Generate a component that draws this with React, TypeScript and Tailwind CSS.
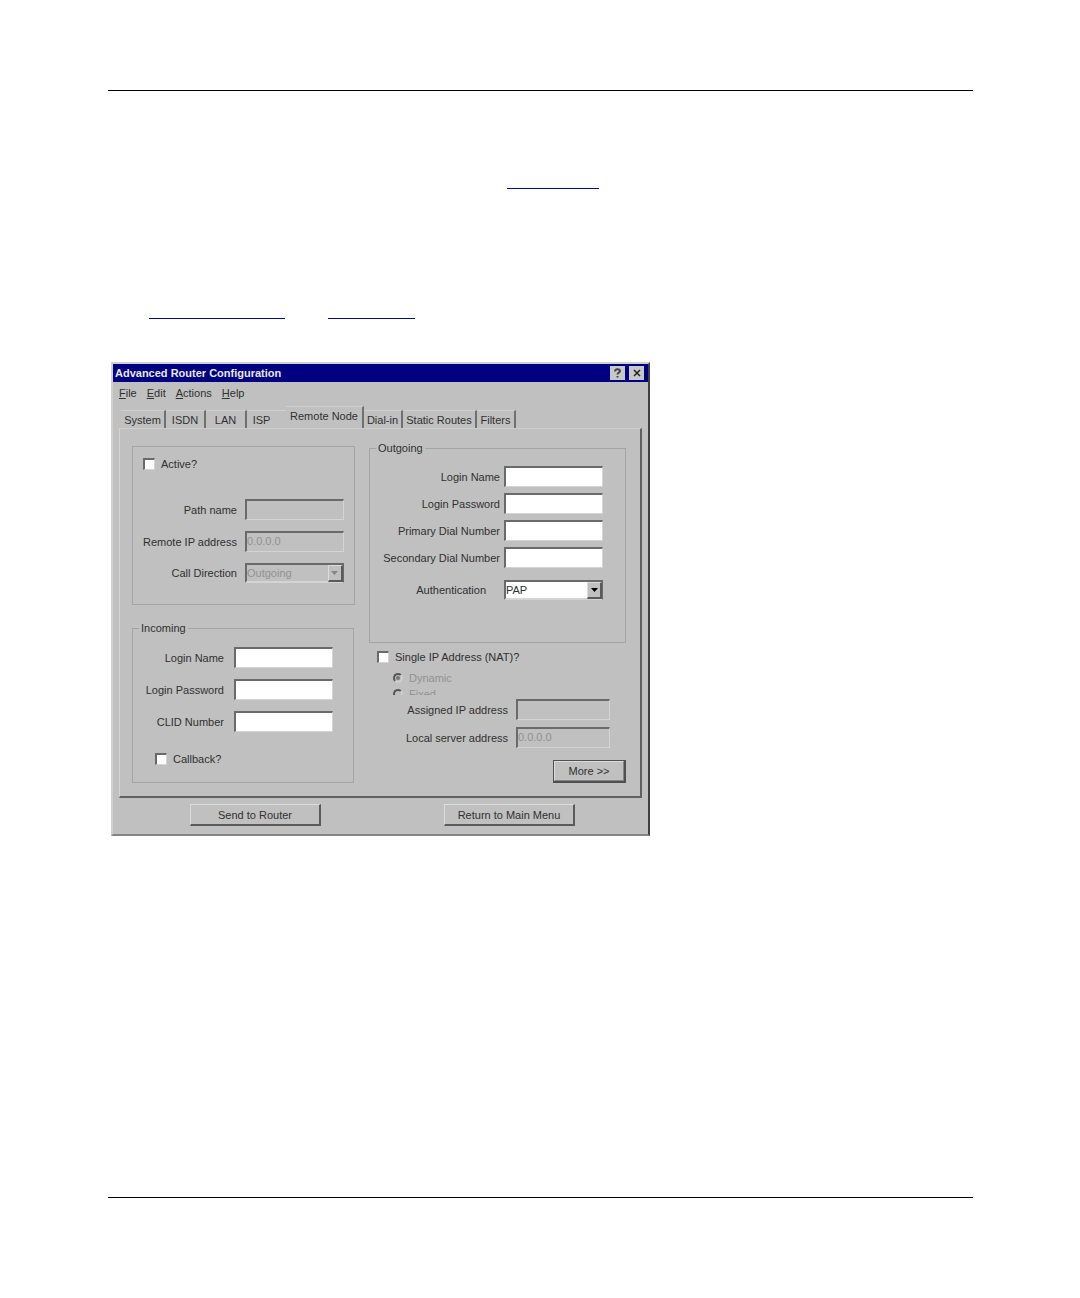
import { ReactNode, useState } from "react"

const sunken = "border-t-2 border-l-2 border-r border-b border-t-[#6a6a6a] border-l-[#6a6a6a] border-r-[#d4d4d4] border-b-[#d4d4d4]"
const raised = "border-t border-l border-r-2 border-b-2 border-t-[#dcdcdc] border-l-[#dcdcdc] border-r-[#5a5a5a] border-b-[#5a5a5a]"

const tabs = [
  { name: "System", width: "w-[45px]" },
  { name: "ISDN", width: "w-[40px]" },
  { name: "LAN", width: "w-[41px]" },
  { name: "ISP", width: "w-[39px]" },
  { name: "Remote Node", width: "w-[78px]" },
  { name: "Dial-in", width: "w-[39px]" },
  { name: "Static Routes", width: "w-[74px]" },
  { name: "Filters", width: "w-[39px]" },
]

const Field = ({ id, label, value, disabled, gap = "gap-2", width = "w-[99px]" }: {
  id: string, label: string, value?: string, disabled?: boolean, gap?: string, width?: string
}) => {
  return (
    <div className={`flex items-center justify-end ${gap}`}>
      <label htmlFor={id} className="whitespace-nowrap">{label}</label>
      <input
        id={id}
        type="text"
        defaultValue={value}
        disabled={disabled}
        className={`h-[21px] ${width} ${sunken} bg-white pb-0.5 outline-none disabled:bg-[#c0c0c0] disabled:text-[#929292]`}
      />
    </div>
  )
}

const SelectField = ({ id, label, options, disabled, gap = "gap-2" }: {
  id: string, label: string, options: string[], disabled?: boolean, gap?: string
}) => {
  return (
    <div className={`flex items-center justify-end ${gap}`}>
      <label htmlFor={id} className="whitespace-nowrap">{label}</label>
      <div className="relative">
        <select
          id={id}
          disabled={disabled}
          className="block h-5 w-[99px] appearance-none border-2 border-[#6a6a6a] border-b-[#d4d4d4] bg-white outline-none disabled:bg-[#c0c0c0] disabled:text-[#929292] disabled:opacity-100"
        >
          {options.map((o) => <option key={o}>{o}</option>)}
        </select>
        <span className={`pointer-events-none absolute top-0.5 right-px flex h-[17px] w-[15px] items-center justify-center bg-[#c0c0c0] ${raised}`}>
          <svg width="7" height="4" viewBox="0 0 7 4" fill={disabled ? "#858585" : "#000"}>
            <path d="M0 0h7L3.5 4z" />
          </svg>
        </span>
      </div>
    </div>
  )
}

const Check = ({ label }: { label: string }) => {
  return (
    <label className="flex items-center gap-1.5">
      <input type="checkbox" className={`size-3 appearance-none bg-white checked:bg-[#000080] ${sunken}`} />
      {label}
    </label>
  )
}

const Dial = ({ label, checked }: { label: string, checked?: boolean }) => {
  return (
    <label className="flex items-center gap-1.5 text-[#929292]">
      <input
        type="radio"
        name="nat"
        disabled
        defaultChecked={checked}
        className="size-2.5 appearance-none rounded-full border-2 border-t-[#555] border-r-[#cfcfcf] border-b-[#cfcfcf] border-l-[#555] checked:bg-[#777] checked:bg-clip-content checked:p-px"
      />
      {label}
    </label>
  )
}

const Button = ({ children }: { children: ReactNode }) => {
  return (
    <button type="button" className={`h-[22px] w-[131px] bg-[#c0c0c0] ${raised}`}>
      {children}
    </button>
  )
}

const RouterWindow = () => {
  const [tab, setTab] = useState("Remote Node")

  return (
    <div className="w-full max-w-[539px] border-2 border-t-[#d0d0d0] border-r-[#404040] border-b-[#848484] border-l-[#d0d0d0] bg-[#c0c0c0] pb-2 text-[11px] leading-[14px] text-[#303030]">
      <div className="flex h-[18px] items-center justify-between bg-[#000080] pr-1 pl-0.5">
        <h1 className="font-bold text-[#e8e8e8]">Advanced Router Configuration</h1>
        <div className="flex gap-1">
          <button type="button" aria-label="Help" className="flex h-3.5 w-[15px] items-center justify-center bg-[#c8c8c8]">
            <svg width="9" height="10" viewBox="0 0 9 10" fill="none" stroke="#444" strokeWidth="2">
              <path d="M2 3.5C2 .5 7 .5 7 3C7 4.5 4.5 4.5 4.5 6.5M4.5 8v1.5" />
            </svg>
          </button>
          <button type="button" aria-label="Close" className="flex h-3.5 w-[15px] items-center justify-center bg-[#c8c8c8]">
            <svg width="8" height="8" viewBox="0 0 8 8" fill="none" stroke="#222" strokeWidth="1.5">
              <path d="M1 1l6 6M7 1L1 7" />
            </svg>
          </button>
        </div>
      </div>

      <div className="flex gap-2.5 px-1.5 pt-1">
        {["File", "Edit", "Actions", "Help"].map((m) => (
          <button key={m} type="button">
            <span className="underline">{m[0]}</span>{m.slice(1)}
          </button>
        ))}
      </div>

      <div role="tablist" className="flex h-7 items-end pl-2">
        {tabs.map((t) => (
          <button
            key={t.name}
            type="button"
            role="tab"
            aria-selected={tab === t.name}
            onClick={() => setTab(t.name)}
            className={`${t.width} shrink-0 border-t border-t-[#cecece] whitespace-nowrap ${tab === t.name ? "h-[22px] pb-1" : "h-[18px]"} ${t.name === "ISP" ? "pr-2.5" : "border-r-2 border-r-[#707070]"}`}
          >
            {t.name}
          </button>
        ))}
      </div>

      <div className="mx-1.5 flex justify-between border-t border-r-2 border-b-2 border-l border-t-[#cecece] border-r-[#606060] border-b-[#606060] border-l-[#d4d4d4] pt-3 pr-3.5 pb-[13px] pl-3">
        <div className="flex w-[222px] flex-col gap-4">
          <fieldset className="mt-[5px] border border-[#a4a4a4] px-2.5 pt-2.5 pb-[21px]">
            <Check label="Active?" />
            <div className="mt-7 flex flex-col gap-[11px]">
              <Field id="path" label="Path name" disabled />
              <Field id="remote-ip" label="Remote IP address" value="0.0.0.0" disabled />
              <SelectField id="direction" label="Call Direction" options={["Outgoing", "Incoming", "Both"]} disabled />
            </div>
          </fieldset>
          <fieldset className="min-w-0 border border-[#a4a4a4] pr-5 pb-4 pl-2.5">
            <legend className="-ml-1 px-0.5">Incoming</legend>
            <div className="mt-3 flex flex-col gap-[11px]">
              <Field id="in-name" label="Login Name" gap="gap-2.5" />
              <Field id="in-password" label="Login Password" gap="gap-2.5" />
              <Field id="clid" label="CLID Number" gap="gap-2.5" />
            </div>
            <div className="mt-5 ml-3">
              <Check label="Callback?" />
            </div>
          </fieldset>
        </div>

        <div className="w-[257px]">
          <fieldset className="border border-[#a4a4a4] pr-[22px] pb-[42px]">
            <legend className="ml-1.5 px-0.5">Outgoing</legend>
            <div className="mt-[11px] flex flex-col gap-1.5">
              <Field id="out-name" label="Login Name" gap="gap-1" />
              <Field id="out-password" label="Login Password" gap="gap-1" />
              <Field id="primary" label="Primary Dial Number" gap="gap-1" />
              <Field id="secondary" label="Secondary Dial Number" gap="gap-1" />
            </div>
            <div className="mt-3">
              <SelectField id="auth" label="Authentication" options={["PAP", "CHAP"]} gap="gap-[18px]" />
            </div>
          </fieldset>
          <div className="mt-[7px] ml-2">
            <Check label="Single IP Address (NAT)?" />
            <div className="mt-[7px] ml-4">
              <Dial label="Dynamic" checked />
              <div className="mt-0.5 h-2 overflow-hidden">
                <Dial label="Fixed" />
              </div>
            </div>
          </div>
          <div className="mt-1 mr-4 flex flex-col gap-[7px]">
            <Field id="assigned" label="Assigned IP address" width="w-[94px]" disabled />
            <Field id="local" label="Local server address" value="0.0.0.0" width="w-[94px]" disabled />
          </div>
          <div className="mt-3 flex justify-end">
            <button type="button" className="h-[23px] w-[73px] border border-r-2 border-b-2 border-[#505050]">
              <span className="flex h-full items-center justify-center border border-t-[#dcdcdc] border-r-[#858585] border-b-[#858585] border-l-[#dcdcdc]">More &gt;&gt;</span>
            </button>
          </div>
        </div>
      </div>

      <div className="mt-1.5 flex justify-between pr-[73px] pl-[77px]">
        <Button>Send to Router</Button>
        <Button>Return to Main Menu</Button>
      </div>
    </div>
  )
}

const App = () => {
  return (
    <div className="flex min-h-screen flex-col bg-white pt-[90px] pr-[107px] pb-[100px] pl-[108px] font-['Liberation_Sans',Arial,sans-serif]">
      <hr className="border-t border-black" />
      <p className="mt-[78px] flex pl-[399px]">
        <a href="#chapter" aria-label="Chapter" className="h-5 w-[92px] border-b border-[#000f80]" />
      </p>
      <p className="mt-[110px] flex gap-[43px] pl-[41px]">
        <a href="#remote-node" aria-label="Remote node" className="h-5 w-[136px] border-b border-[#000f80]" />
        <a href="#figure" aria-label="Figure" className="h-5 w-[87px] border-b border-[#000f80]" />
      </p>
      <main className="mt-[43px] pb-10 pl-[3px]">
        <RouterWindow />
      </main>
      <hr className="mt-auto border-t border-black" />
    </div>
  )
}

export default App
